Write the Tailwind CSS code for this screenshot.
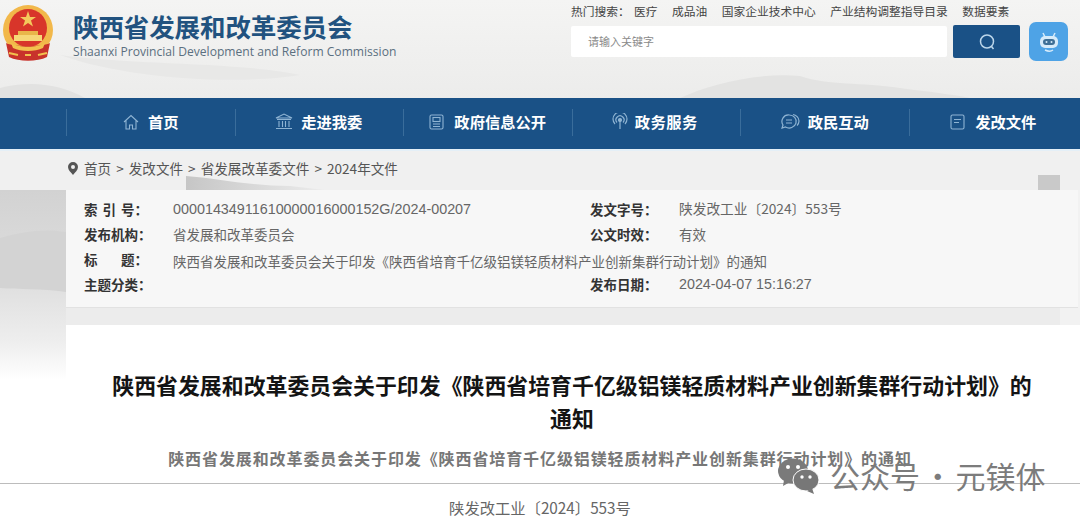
<!DOCTYPE html>
<html lang="zh-CN">
<head>
    <meta charset="UTF-8">
    <title>陕西省发展和改革委员会</title>
    <script src="https://cdn.jsdelivr.net/npm/@tailwindcss/browser@4"></script>
</head>
<body class="bg-white font-['Noto_Sans_CJK_SC','Noto_Sans',sans-serif]">
<div class="relative w-[1080px] h-[521px] overflow-hidden bg-white">
    <!-- ink-wash background -->
    <svg class="absolute inset-0" width="1080" height="521" viewBox="0 0 1080 521">
        <defs>
            <linearGradient id="fade" x1="0" y1="0" x2="0" y2="1">
                <stop offset="0" stop-color="#d2d2d2"/>
                <stop offset="0.5" stop-color="#dfdfdf"/>
                <stop offset="0.8" stop-color="#eeeeee"/>
                <stop offset="1" stop-color="#ffffff"/>
            </linearGradient>
            <linearGradient id="top" x1="0" y1="0" x2="0" y2="1">
                <stop offset="0" stop-color="#f4f4f3"/>
                <stop offset="1" stop-color="#ececeb"/>
            </linearGradient>
            <linearGradient id="hill" x1="0" y1="0" x2="1" y2="0">
                <stop offset="0" stop-color="#c6c6c6"/>
                <stop offset="1" stop-color="#ececec"/>
            </linearGradient>
        </defs>
        <rect width="1080" height="98" fill="url(#top)"/>
        <path d="M0 98V88C30 80 60 84 85 98Z" fill="#e2e2e1"/>
        <path d="M680 98C710 84 760 72 800 76C830 86 860 82 900 88C930 92 950 94 970 98Z" fill="#e3e3e2"/>
        <path d="M60 55C130 65 240 62 300 75C240 85 130 80 60 55Z" fill="#e8e8e7"/>
        <rect y="150" width="1080" height="40" fill="#f0f0f0"/>
        <path d="M186 190V176C215 178 250 186 290 186L325 190Z" fill="url(#hill)"/>
        <rect x="1038" y="175" width="22" height="15" fill="#c9c9c9"/>
        <rect y="190" width="66" height="190" fill="url(#fade)"/>
        <path d="M0 238C20 232 45 228 66 232V292C40 288 20 290 0 288Z" fill="#d3d3d3"/>
        <rect y="307" x="66" width="1014" height="18" fill="#ececec"/>
        <rect y="190" x="1060" width="20" height="135" fill="#f2f2f2"/>
    </svg>

    <div class="relative flex flex-col">
        <header class="h-[98px] flex">
            <div class="flex pl-[3px] pt-[5px] gap-[20px]">
                <svg width="50" height="56" viewBox="0 0 50 56">
                    <circle cx="25" cy="25" r="25" fill="#f2b84a"/>
                    <circle cx="25" cy="23" r="19" fill="#d8352a"/>
                    <path d="M25 6l2 6h6l-5 3.5 2 6-5-3.6-5 3.6 2-6-5-3.500h6z" fill="#f4c95c"/>
                    <path d="M11 30h28v6H11z" fill="#f6d777"/>
                    <path d="M15 26h20v4H15z" fill="#e9b64a"/>
                    <path d="M3 38c6 4 38 4 44 0l-3 14c-10 5-28 5-38 0z" fill="#c8322b"/>
                    <path d="M8 38c8 5 26 5 34 0l-2 5c-8 4-22 4-30 0z" fill="#f2c14e"/>
                    <path d="M6 48l9 2M44 48l-9 2M22 50h6" stroke="#f2c14e" stroke-width="2"/>
                </svg>
                <div class="flex flex-col pt-[4px]">
                    <div class="text-[25.500px] leading-[33px] font-bold text-[#21527f] tracking-[-0.100px]">陕西省发展和改革委员会</div>
                    <div class="text-[12.100px] leading-[19px] text-[#5b6f80] font-['Open_Sans',sans-serif]">Shaanxi Provincial Development and Reform Commission</div>
                </div>
            </div>
            <div class="ml-auto mr-[12px] flex flex-col w-[497px] pt-[3px]">
                <div class="flex text-[11.750px] leading-[16px] text-[#444] whitespace-nowrap">
                    <span class="w-[63px] shrink-0">热门搜索：</span>
                    <div class="flex gap-[14.500px]">
                        <span>医疗</span>
                        <span>成品油</span>
                        <span>国家企业技术中心</span>
                        <span>产业结构调整指导目录</span>
                        <span>数据要素</span>
                    </div>
                </div>
                <div class="flex items-center mt-[3px]">
                    <div class="w-[376px] h-[31px] bg-white rounded-[2px] flex items-center pl-[17px] text-[11px] text-[#8a8a8a]">请输入关键字</div>
                    <div class="ml-[6px] w-[67px] h-[33px] bg-[#1a5186] rounded-[2px] flex items-center justify-center">
                        <svg width="18" height="18" viewBox="0 0 18 18" fill="none" stroke="#bcd6ea" stroke-width="1.500">
                            <circle cx="9" cy="8.500" r="6.500"/>
                            <path d="M13.500 13.500l2 2.500"/>
                        </svg>
                    </div>
                    <div class="ml-[9px] w-[39px] h-[39px] bg-[#4ea3e6] rounded-[7px] flex items-center justify-center">
                        <svg width="24" height="24" viewBox="0 0 24 24">
                            <path d="M6 3l2 4M18 3l-2 4" stroke="#d6ebfa" stroke-width="1.500"/>
                            <rect x="3" y="6" width="18" height="12" rx="5" fill="#d6ebfa"/>
                            <rect x="6" y="9" width="12" height="6" rx="3" fill="#3e6f96"/>
                            <circle cx="9.500" cy="12" r="1" fill="#d6ebfa"/>
                            <circle cx="14.500" cy="12" r="1" fill="#d6ebfa"/>
                            <path d="M8 20c3 1.500 6 1.500 8 0" stroke="#d6ebfa" stroke-width="1.500" fill="none"/>
                        </svg>
                    </div>
                </div>
            </div>
        </header>

        <nav class="h-[53px] bg-[#1a5186] border-b-[2px] border-[#e4eff7] pl-[66px] flex items-start pt-[11px]">
            <a class="w-[168.500px] h-[27px] pb-[2px] border-l border-[#3a6d9b] flex items-center justify-center gap-[9px] text-[15.300px] font-bold text-white">
                <svg width="16" height="16" viewBox="0 0 16 16" fill="none" stroke="#8fb4d3" stroke-width="1.100"><path d="M1 8l7-6.500L15 8M3 6.500V15h3.500v-4h3v4H13V6.500"/></svg>
                <span>首页</span>
            </a>
            <a class="w-[168.500px] h-[27px] pb-[2px] border-l border-[#3a6d9b] flex items-center justify-center gap-[8px] pr-[1px] text-[15.300px] font-bold text-white">
                <svg width="18" height="17" viewBox="0 0 18 17" fill="none" stroke="#8fb4d3" stroke-width="1.100"><path d="M1 5l8-4 8 4zM2 6.500h14M4 8v6M7.500 8v6M10.500 8v6M14 8v6M1 15.500h16"/></svg>
                <span>走进我委</span>
            </a>
            <a class="w-[168.500px] h-[27px] pb-[2px] border-l border-[#3a6d9b] flex items-center justify-center gap-[10px] text-[15.300px] font-bold text-white">
                <svg width="15" height="16" viewBox="0 0 15 16" fill="none" stroke="#8fb4d3" stroke-width="1.100"><rect x="1" y="1" width="13" height="14" rx="1.500"/><rect x="4" y="3.500" width="7" height="4"/><path d="M4 10h7M4 12.500h7"/></svg>
                <span>政府信息公开</span>
            </a>
            <a class="w-[168.500px] h-[27px] pb-[2px] border-l border-[#3a6d9b] flex items-center justify-center gap-[7px] pr-[3px] text-[15.300px] font-bold text-white">
                <svg width="16" height="17" viewBox="0 0 16 17" fill="none" stroke="#8fb4d3" stroke-width="1.200"><path d="M3 11a7 7 0 1 1 10 0M5 9.500a4 4 0 1 1 6 0"/><circle cx="8" cy="7" r="1.500" fill="#8fb4d3"/><path d="M8 8v8"/></svg>
                <span class="tracking-[0.500px]">政务服务</span>
            </a>
            <a class="w-[168.500px] h-[27px] pb-[2px] border-l border-[#3a6d9b] flex items-center justify-center gap-[8px] pr-[1px] text-[15.300px] font-bold text-white">
                <svg width="20" height="17" viewBox="0 0 20 17" fill="none" stroke="#8fb4d3" stroke-width="1.200"><path d="M9 2a7 6.500 0 1 1-3.500 12L2 15l1-3A6.500 6.500 0 0 1 9 2z"/><path d="M6 7h6M6 10h6"/><path d="M13 1.500c3 .5 6 3 6 6.500 0 2-1 3.500-2 4.500"/></svg>
                <span>政民互动</span>
            </a>
            <a class="w-[168.500px] h-[27px] pb-[2px] border-l border-[#3a6d9b] flex items-center justify-center gap-[10px] text-[15.300px] font-bold text-white">
                <svg width="15" height="16" viewBox="0 0 15 16" fill="none" stroke="#8fb4d3" stroke-width="1.100"><rect x="1" y="1" width="13" height="14" rx="1.500"/><path d="M4 5.500h7M4 8.500h5"/></svg>
                <span>发改文件</span>
            </a>
        </nav>

        <div class="h-[39px] pb-[5px] pl-[68px] flex items-center gap-[5px] text-[13.600px] text-[#555] whitespace-nowrap">
            <svg class="mr-[1px]" width="10" height="13" viewBox="0 0 10 13"><path fill-rule="evenodd" d="M5 0a5 5 0 0 1 5 5c0 3-3 5.500-5 8-2-2.500-5-5-5-8a5 5 0 0 1 5-5zm0 3a2 2 0 1 0 0 4 2 2 0 0 0 0-4z" fill="#555"/></svg>
            <span>首页</span><span>&gt;</span><span>发改文件</span><span>&gt;</span><span>省发展改革委文件</span><span>&gt;</span><span>2024年文件</span>
        </div>

        <section class="ml-[66px] mr-[2px] h-[118px] bg-[#f7f7f7] border-b border-[#e2e2e2] pl-[18px] pt-[6px] grid grid-cols-[89px_417px_89px_1fr] auto-rows-[25.300px] items-center text-[13.500px] text-[#666]">
            <b class="text-[#333] flex justify-between w-[64px]"><span>索</span><span>引</span><span>号：</span></b>
            <span class="font-['Liberation_Sans',sans-serif] text-[14.350px] pt-[2px]">00001434911610000016000152G/2024-00207</span>
            <b class="text-[#333]">发文字号：</b>
            <span class="text-[13.700px]">陕发改工业〔2024〕553号</span>

            <b class="text-[#333]">发布机构：</b>
            <span>省发展和改革委员会</span>
            <b class="text-[#333]">公文时效：</b>
            <span>有效</span>

            <b class="text-[#333] flex justify-between w-[64px]"><span>标</span><span>题：</span></b>
            <span class="col-span-3 pt-[3px]">陕西省发展和改革委员会关于印发《陕西省培育千亿级铝镁轻质材料产业创新集群行动计划》的通知</span>

            <b class="text-[#333]">主题分类：</b>
            <span></span>
            <b class="text-[#333]">发布日期：</b>
            <span class="font-['Liberation_Sans',sans-serif] text-[14.300px]">2024-04-07 15:16:27</span>
        </section>

        <div class="ml-[66px] mr-[2px] mt-[18px] h-[115px] bg-white pt-[42px] px-[40px] text-center text-[21.900px] leading-[33px] font-bold text-[#141414]">
            陕西省发展和改革委员会关于印发《陕西省培育千亿级铝镁轻质材料产业创新集群行动计划》的通知
        </div>

        <div class="h-[81px] bg-white flex flex-col">
            <div class="h-[43px] border-b border-[#bcbcbc] pt-[4px] text-center text-[16px] leading-[26px] font-bold text-[#777] tracking-[0.900px]">陕西省发展和改革委员会关于印发《陕西省培育千亿级铝镁轻质材料产业创新集群行动计划》的通知</div>
            <div class="pt-[11px] text-center text-[15.300px] leading-[24px] text-[#666]">陕发改工业〔2024〕553号</div>
        </div>
    </div>

    <!-- watermark -->
    <div class="absolute left-[777px] top-[456px] flex items-center gap-[10px] text-[30px] leading-[40px] text-[#7c7c7c] whitespace-nowrap">
        <svg width="43" height="38" viewBox="0 0 43 38">
            <ellipse cx="16" cy="14" rx="15" ry="12.500" fill="#7a7a7a"/>
            <path d="M7 23l-1 6 7-4z" fill="#7a7a7a"/>
            <circle cx="11" cy="10" r="2" fill="#fff"/>
            <circle cx="21" cy="10" r="2" fill="#fff"/>
            <ellipse cx="29" cy="23" rx="13" ry="11" fill="#777" stroke="#fff" stroke-width="1"/>
            <path d="M35 31l2 6-7-3z" fill="#777"/>
            <circle cx="25" cy="20" r="1.700" fill="#fff"/>
            <circle cx="33" cy="20" r="1.700" fill="#fff"/>
        </svg>
        <span class="-mt-[1px] [word-spacing:-4px]">公众号 · 元镁体</span>
    </div>
</div>
</body>
</html>
